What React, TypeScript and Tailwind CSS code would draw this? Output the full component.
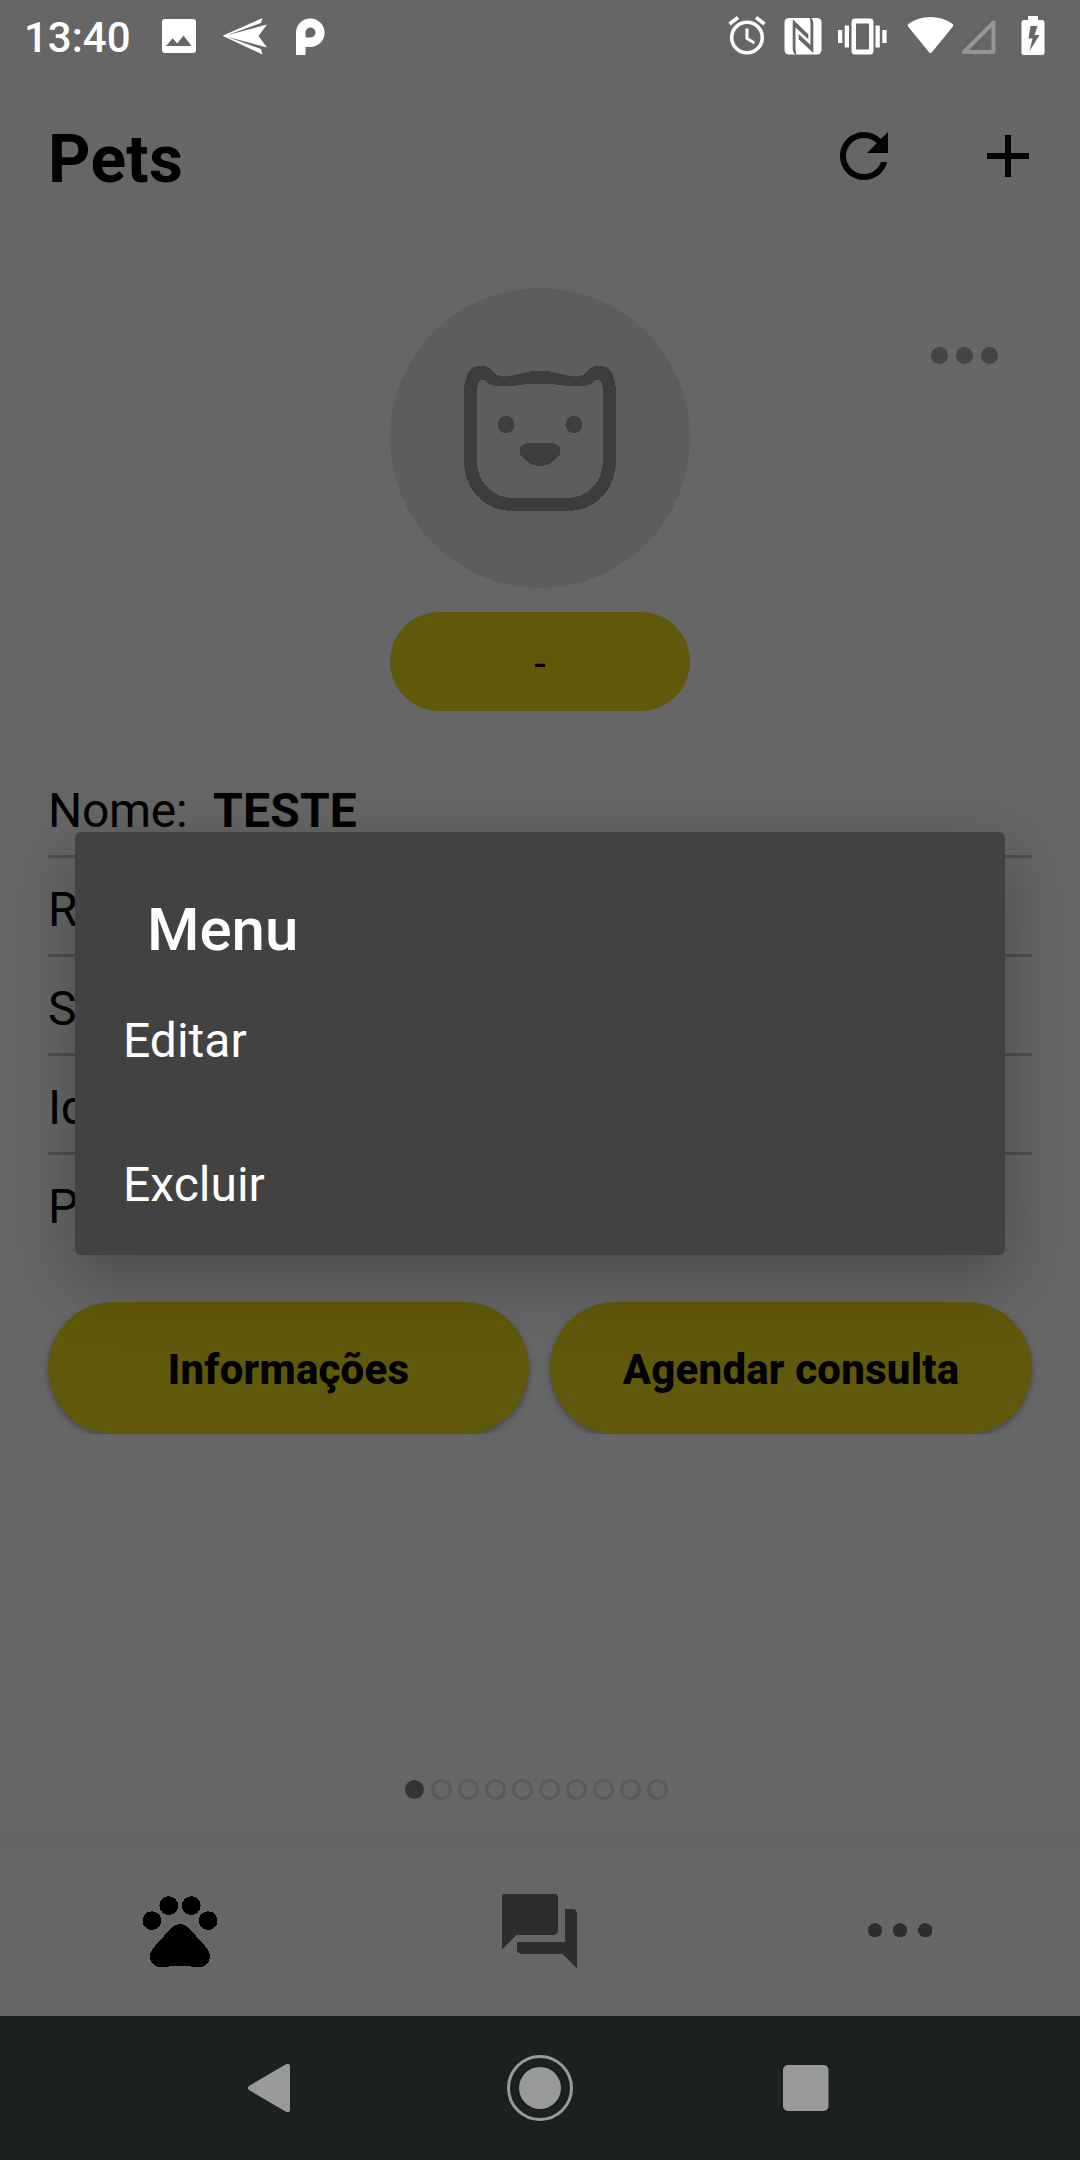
import { MdRefresh, MdAdd, MdPets, MdQuestionAnswer } from "react-icons/md";

function StatusBar() {
  return (
    <div className="flex h-[72px] items-start text-white">
      <span className="ml-6 mt-[13px] w-[110px] text-[42px] font-medium leading-[49px]">13:40</span>
      <svg className="ml-[27px] mt-[18px] h-9 w-9" viewBox="0 0 36 36" fill="currentColor">
        <path
          fillRule="evenodd"
          d="M4 1h28q3 0 3 3v28q0 3-3 3H4q-3 0-3-3V4q0-3 3-3ZM5 28h25.500l-8-10.500-6.300 8-4.500-5.300Z"
        />
      </svg>
      <svg className="ml-[25px] mt-[17px] h-[38px] w-[46px]" viewBox="0 0 46 38" fill="currentColor">
        <path d="M.5 18.700 40.500 1 39 6 5 18.200 45 7.500 36.500 19 45 30.500 5 19.800 39 32l1.500 5.500Z" />
      </svg>
      <svg className="ml-[27px] mt-[17px] h-[39px] w-[30px]" viewBox="0 0 30 39" fill="currentColor">
        <path
          fillRule="evenodd"
          d="M1 38V15.500A14.300 14.300 0 1 1 15.300 30H10.500v8ZM10.500 20.500h5a5 5 0 1 0-5-5Z"
        />
      </svg>
      <div className="ml-auto mr-[35px] flex items-start">
        <svg className="mt-[16px] h-10 w-10" viewBox="0 0 40 40" fill="none" stroke="currentColor">
          <circle cx="20" cy="21.500" r="15.300" strokeWidth="3.600" />
          <path d="M20 12.500V22.500L27.500 27" strokeWidth="3" />
          <path d="M2.500 8 11 1.500M37.500 8 29 1.500" strokeWidth="3.600" />
        </svg>
        <svg className="ml-[17px] mt-[17px] h-[38px] w-[38px]" viewBox="0 0 38 38">
          <rect x="0.500" y="1" width="37" height="36.500" rx="4.500" fill="white" />
          <path d="M8.700 2.300 24.300 17.300V22.300L11.500 10.500V31q0 4 1 7-3.500-1-3.800-6Z" fill="#666" />
          <path d="M29.300 36 14.700 22.300V17L26.500 28V7q0-4-1-7 3.500 1 3.800 6Z" fill="#666" />
        </svg>
        <svg className="ml-[16px] mt-[17px] h-[38px] w-[49px]" viewBox="0 0 49 38" fill="currentColor">
          <rect x="0" y="13" width="4.300" height="13" />
          <rect x="6.700" y="8.500" width="4.300" height="22" />
          <rect x="37.500" y="8.500" width="4.300" height="22" />
          <rect x="44.300" y="13" width="4.300" height="13" />
          <path
            fillRule="evenodd"
            d="M17 1.500h15q3.500 0 3.500 3.500v29q0 3.500-3.500 3.500H17q-3.500 0-3.500-3.500V5q0-3.500 3.500-3.500ZM18 6.500v26h13v-26Z"
          />
        </svg>
        <svg className="ml-[20px] mt-[16px] h-[38px] w-[47px]" viewBox="0 0 47 38" fill="currentColor">
          <path d="M1.300 8Q11 1 23.500 1T45.700 8q1 1 .2 2.500L25.500 35.500q-2 3-4 0L1 10.500Q.300 9 1.300 8Z" />
        </svg>
        <svg className="ml-[6px] mt-[18px] h-[38px] w-[37px]" viewBox="0 0 37 38" fill="none">
          <path
            d="M33.500 4.500V34H4Z"
            stroke="#959595"
            strokeWidth="4"
            strokeLinejoin="round"
          />
        </svg>
        <svg className="ml-[24px] mt-[16px] h-[39px] w-[24px]" viewBox="0 0 24 39" fill="currentColor">
          <path
            fillRule="evenodd"
            d="M7 0h10v4h4q2.500 0 2.500 2.500v30Q23.500 39 21 39H3Q.500 39 .500 36.500v-30Q.500 4 3 4h4ZM9.500 10 7.500 22.500h4L8.500 35 18.500 19h-5L16.500 10Z"
          />
        </svg>
      </div>
    </div>
  );
}

function Header() {
  return (
    <header className="flex h-[168px] items-center pl-12 pr-9">
      <h1 className="mt-2 text-[66px] font-bold leading-[78px] tracking-[0.3px]">Pets</h1>
      <MdRefresh className="ml-auto h-[72px] w-[72px] text-[#040404]" />
      <MdAdd className="ml-[72px] h-[72px] w-[72px] text-[#040404]" />
    </header>
  );
}

function PetAvatar() {
  return (
    <div className="flex h-[300px] w-[300px] items-center justify-center rounded-full bg-[#5d5d5d]">
      <svg
        className="h-[300px] w-[300px]"
        viewBox="0 0 300 300"
        fill="#3d3d3d"
        shapeRendering="crispEdges"
      >
        <path
          fillRule="evenodd"
          d="M74 106C74 90 78 77.500 91 77.500C103 78 102 88 113 88.500C126 89 134 83 144 83H156C166 83 174 89 187 88.500C198 88 197 78 209 77.500C222 77.500 226 90 226 106V174C226 200 206 223 179 223H121C94 223 74 200 74 174ZM87 107V173C87 193 102 210 123 210H177C198 210 213 193 213 173V107C213 99 212 91.500 208 91.500C203 92 203 98.500 190 98.500C175 98.500 165 95.500 150 95.500C135 95.500 125 98.500 110 98.500C97 98.500 97 92 92 91.500C88 91.500 87 99 87 107Z"
        />
        <circle cx="116" cy="136.500" r="8.500" />
        <circle cx="184" cy="136.500" r="8.500" />
        <path d="M138 155h24q4 .5 8 4v7q-3 4-7 7-4 4-9 4.500h-8q-5-.5-9-4.500-4-3-7-7v-7q4-3.500 8-4Z" />
      </svg>
    </div>
  );
}

const fields = [
  { label: "Nome:", value: "TESTE" },
  { label: "Raça:", value: "" },
  { label: "Sexo:", value: "" },
  { label: "Idade:", value: "" },
  { label: "Peso:", value: "" },
];

function PetCard() {
  return (
    <section className="relative flex flex-col items-center px-12 pt-12">
      <div className="absolute right-[82px] top-[107px] flex gap-[8px]">
        <span className="h-[17px] w-[17px] rounded-full bg-[#444]" />
        <span className="h-[17px] w-[17px] rounded-full bg-[#444]" />
        <span className="h-[17px] w-[17px] rounded-full bg-[#444]" />
      </div>
      <PetAvatar />
      <div className="mt-6 flex h-[99px] w-[300px] items-center justify-center rounded-[50px] bg-[#60580a] pt-[3px] text-[42px]">
        -
      </div>
      <dl className="mt-[48px] w-full text-[48px] leading-[56px]">
        {fields.map((field, i) => (
          <div
            key={field.label}
            className={
              i < fields.length - 1
                ? "flex h-[99px] border-b-[3px] border-[#505050] pt-[24px]"
                : "flex h-[99px] pt-[24px]"
            }
          >
            <dt className="w-[165px] tracking-[-0.3px]">{field.label}</dt>
            <dd className="font-bold tracking-[0.2px]">{field.value}</dd>
          </div>
        ))}
      </dl>
      <div className="mt-[48px] flex w-full justify-between text-[42px] font-extrabold tracking-[0.2px]">
        <button className="h-[132px] w-[481px] rounded-full bg-[#60580a] pt-[2px] shadow-[0_3px_6px_rgba(0,0,0,0.3)] [clip-path:inset(-12px_-12px_0_-12px)]">
          Informações
        </button>
        <button className="h-[132px] w-[482px] rounded-full bg-[#60580a] pt-[2px] shadow-[0_3px_6px_rgba(0,0,0,0.3)] [clip-path:inset(-12px_-12px_0_-12px)]">
          Agendar consulta
        </button>
      </div>
    </section>
  );
}

function PageDots() {
  return (
    <div className="mr-[9px] flex h-[21px] items-center justify-center gap-[6px]">
      <span className="mx-[1px] h-[19px] w-[19px] rounded-full bg-[#343434]" />
      {Array.from({ length: 9 }, (_, i) => (
        <span key={i} className="h-[21px] w-[21px] rounded-full border-[3px] border-[#595959]" />
      ))}
    </div>
  );
}

function TabBar() {
  return (
    <nav className="grid h-[168px] grid-cols-3 justify-items-center pt-[37px]">
      <MdPets className="mr-[1px] h-[90px] w-[90px]" shapeRendering="crispEdges" />
      <MdQuestionAnswer
        className="mr-[2px] mt-[1px] h-[90px] w-[90px] text-[#2e2e2e]"
        shapeRendering="crispEdges"
      />
      <svg className="h-[90px] w-[90px]" viewBox="0 0 90 90" fill="#2e2e2e" shapeRendering="crispEdges">
        <circle cx="20" cy="45.300" r="7.200" />
        <circle cx="45" cy="45.300" r="7.200" />
        <circle cx="70.300" cy="45.300" r="7.200" />
      </svg>
    </nav>
  );
}

function SystemNav() {
  return (
    <div className="flex h-36 items-center bg-[#1c2021] pl-[234px]">
      <svg className="h-[72px] w-[72px]" viewBox="0 0 72 72" fill="#999b9a">
        <path d="M15 34 51.500 12.500Q56 10 56 15V57Q56 62 51.500 59.500L15 38Q13 36 15 34Z" />
      </svg>
      <svg className="ml-[198px] h-[72px] w-[72px]" viewBox="0 0 72 72" fill="#999b9a">
        <circle cx="36" cy="36" r="31.500" fill="none" stroke="#999b9a" strokeWidth="3" />
        <circle cx="36" cy="36" r="21" />
      </svg>
      <svg className="ml-[194px] h-[72px] w-[72px]" viewBox="0 0 72 72" fill="#999b9a">
        <rect x="13" y="13" width="45.500" height="46" rx="5" />
      </svg>
    </div>
  );
}

function MenuDialog() {
  return (
    <div className="absolute inset-0 flex items-start justify-center pt-[832px]">
      <div
        role="dialog"
        className="flex h-[423px] w-[930px] flex-col rounded-[6px] bg-[#424242] text-white shadow-[0_22px_66px_rgba(0,0,0,0.28)]"
      >
        <h2 className="ml-[72px] mt-[63px] text-[60px] font-medium leading-[70px]">Menu</h2>
        <div className="mt-[48px] flex flex-col gap-[88px] pl-12">
          <button className="flex h-[56px] items-center text-[48px] leading-[56px]">Editar</button>
          <button className="flex h-[56px] items-center text-[48px] leading-[56px]">Excluir</button>
        </div>
      </div>
    </div>
  );
}

export default function App() {
  return (
    <div className="relative flex h-[2160px] w-[1080px] flex-col overflow-hidden bg-[#666] font-['Roboto',sans-serif] text-black">
      <StatusBar />
      <Header />
      <PetCard />
      <div className="mt-auto pb-[32px]">
        <PageDots />
      </div>
      <div className="h-4 bg-[#646464]" />
      <TabBar />
      <SystemNav />
      <MenuDialog />
    </div>
  );
}
